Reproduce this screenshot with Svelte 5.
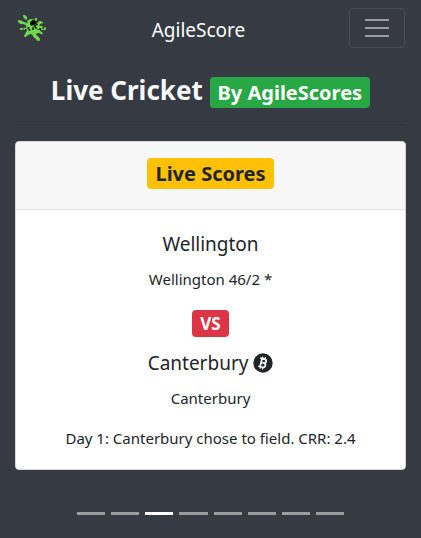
<script>
  let menuOpen = $state(false);
  let active = $state(2);
  const slides = [0, 1, 2, 3, 4, 5, 6, 7];
</script>

<nav class="navbar">
  <a class="logo" href="#home" aria-label="Home">
    <svg width="32" height="34" viewBox="48 24 96 102" aria-hidden="true">
      <path fill="#70d84a" d="M69 45H75L81 51V59H77L70 52ZM54 61H63L70 65L79 68L84 71L81 65L84 60L92 57L104 58L106 54H111V61L109 66L114 68L118 63H124V66H129V69L121 72L117 76L126 79L131 82H138V87L134 91L124 89L119 92L126 96L129 103H124L118 99L111 100L108 104L116 111L120 117V122H111L107 116L101 112L98 106L92 101L86 105L79 108V111H73V105L77 100V96L82 92L75 91L70 88V84L78 83L79 77L72 73L62 72L54 67ZM60 84H68V90H60Z" />
      <path fill="#050805" d="M97 59H105V62H110V71H113V76H107V73H104V82H101V75H97V78H94V74H90V65H94V62H97ZM105 76H108V82H105ZM75 87H79V93H75ZM82 82H88V87H91V92H86V87H82ZM97 82H101V90H97ZM106 82H110V87H106ZM118 84H123V90H118ZM128 82H132V87H128ZM112 87H115V90H112Z" />
    </svg>
  </a>
  <a class="brand" href="#home">AgileScore</a>
  <button class="toggler" aria-label="Toggle navigation" aria-expanded={menuOpen} onclick={() => (menuOpen = !menuOpen)}>
    <svg width="30" height="30" viewBox="0 0 30 30" aria-hidden="true">
      <path stroke="currentColor" stroke-width="2" stroke-miterlimit="10" d="M3 7h24M3 15h24M3 23h24" />
    </svg>
  </button>
</nav>

<main>
  <h1>Live Cricket <span class="badge green">By AgileScores</span></h1>
  <hr />
  <section class="card">
    <header><h2 class="badge yellow">Live Scores</h2></header>
    <div class="body">
      <h3>Wellington</h3>
      <p>Wellington 46/2 *</p>
      <div class="versus"><span class="badge red">VS</span></div>
      <h3>
        Canterbury
        <svg class="coin" width="20" height="20" viewBox="0 0 20 20" aria-hidden="true">
          <circle cx="10" cy="10" r="9.7" fill="#212529" />
          <g transform="rotate(13 10 10)" fill="none" stroke="#fff">
            <path stroke-width="1.7" d="M8 5.8v8.4M6.2 5.8h4.5a2 2 0 0 1 0 4H8M10.7 9.8a2.2 2.2 0 0 1 0 4.4H6.2" />
            <path stroke-width="1.2" d="M8.5 3.7v2M11 3.7v2M8.5 14.2v2M11 14.2v2" />
          </g>
        </svg>
      </h3>
      <p>Canterbury</p>
      <p class="status">Day 1: Canterbury chose to field. CRR: 2.4</p>
    </div>
  </section>
  <div class="indicators">
    {#each slides as slide}
      <button class:active={slide === active} aria-label={`Match ${slide + 1}`} onclick={() => (active = slide)}></button>
    {/each}
  </div>
</main>

<style>
  :global(body) {
    margin: 0;
    background: #363a42;
    color: #212529;
    font: 15px/24px "Noto Sans", "Open Sans", sans-serif;
  }
  .navbar {
    display: flex;
    align-items: center;
    justify-content: space-between;
    padding: 8px 16px;
  }
  .logo {
    height: 40px;
  }
  .logo svg,
  .toggler svg {
    display: block;
  }
  .brand {
    color: #fff;
    font-size: 19px;
    line-height: 32px;
    text-decoration: none;
    padding-top: 4px;
  }
  .toggler {
    padding: 4px 12px;
    border: 1px solid #4a4e55;
    border-radius: 4px;
    background: transparent;
    color: #999b9f;
  }
  main {
    padding: 16px 15px;
  }
  h1,
  h2,
  h3,
  p {
    margin: 0;
    text-align: center;
  }
  h1 {
    color: #f8f9fa;
    font-size: 26px;
    line-height: 36px;
    font-weight: 700;
  }
  hr {
    margin: 16px 0;
    border: 0;
    border-top: 1px solid #30343b;
  }
  .badge {
    display: inline-block;
    padding: 5px 8px;
    border-radius: 4px;
    font-size: 20px;
    line-height: 21px;
    font-weight: 700;
    white-space: nowrap;
  }
  .green {
    background: #28a745;
    color: #fff;
  }
  .yellow {
    background: #ffc107;
  }
  .red {
    background: #dc3545;
    color: #fff;
    font-size: 17px;
    line-height: 17px;
  }
  .card {
    background: #fff;
    border: 1px solid #d4d5d6;
    border-radius: 4px;
    overflow: hidden;
  }
  header {
    display: flex;
    justify-content: center;
    padding: 16px 20px 20px;
    background: #f7f7f7;
    border-bottom: 1px solid #dfdfdf;
  }
  .body {
    padding: 22px 20px 19px;
  }
  h3 {
    font-size: 19px;
    line-height: 24px;
    font-weight: 400;
    margin-bottom: 11px;
  }
  .coin {
    vertical-align: -3px;
  }
  .versus {
    display: flex;
    justify-content: center;
    margin: 19px 0 14px;
  }
  .status {
    margin-top: 16px;
  }
  .indicators {
    display: flex;
    justify-content: center;
    margin: 32px 15% 0;
  }
  .indicators button {
    flex: 0 1 30px;
    height: 23px;
    margin: 0 3px;
    padding: 0;
    border: solid transparent;
    border-width: 10px 0;
    background: #9a9c9f;
    background-clip: padding-box;
  }
  .indicators .active {
    background-color: #fff;
  }
</style>
